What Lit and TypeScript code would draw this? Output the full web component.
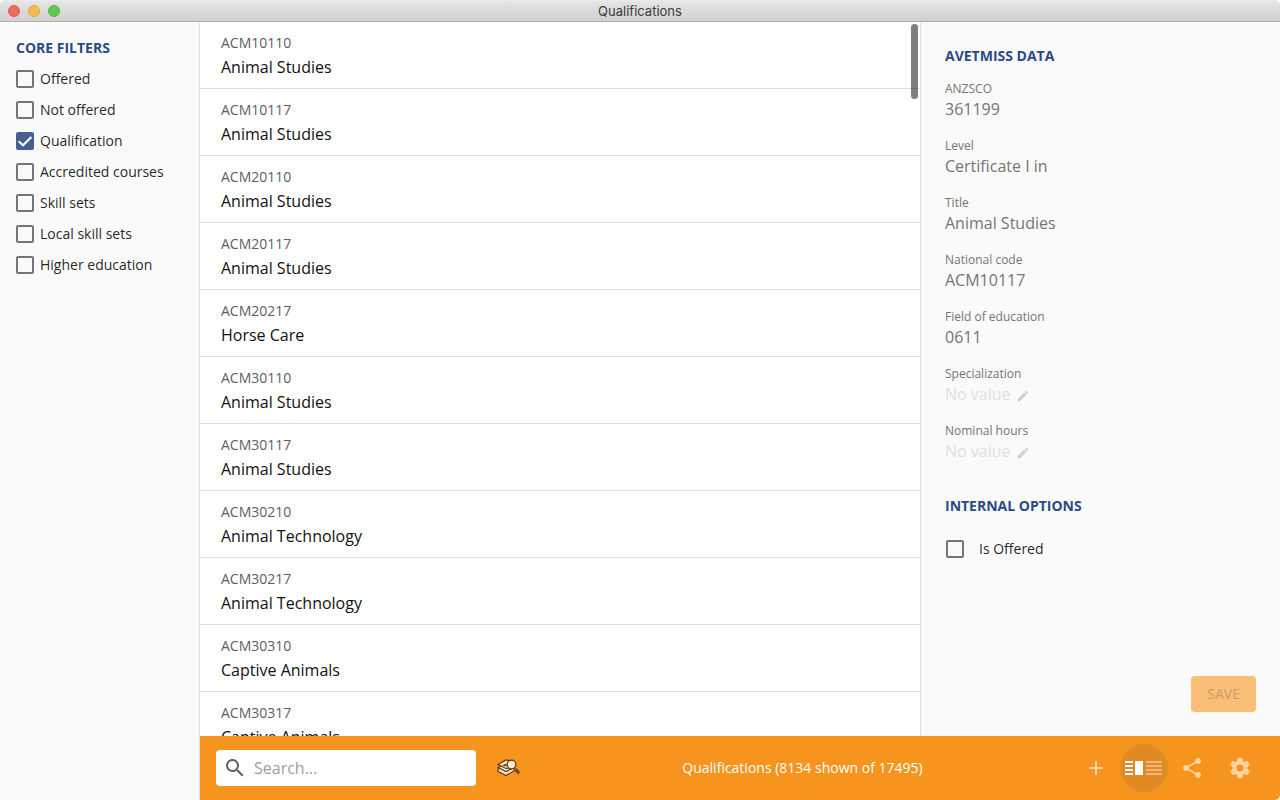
import { LitElement, html, css, svg } from "lit";
import { customElement, property } from "lit/decorators.js";

interface Qualification {
  code: string;
  title: string;
}

interface Field {
  label: string;
  value?: string;
}

const FILTERS = [
  { label: "Offered", checked: false },
  { label: "Not offered", checked: false },
  { label: "Qualification", checked: true },
  { label: "Accredited courses", checked: false },
  { label: "Skill sets", checked: false },
  { label: "Local skill sets", checked: false },
  { label: "Higher education", checked: false },
];

const QUALIFICATIONS: Qualification[] = [
  { code: "ACM10110", title: "Animal Studies" },
  { code: "ACM10117", title: "Animal Studies" },
  { code: "ACM20110", title: "Animal Studies" },
  { code: "ACM20117", title: "Animal Studies" },
  { code: "ACM20217", title: "Horse Care" },
  { code: "ACM30110", title: "Animal Studies" },
  { code: "ACM30117", title: "Animal Studies" },
  { code: "ACM30210", title: "Animal Technology" },
  { code: "ACM30217", title: "Animal Technology" },
  { code: "ACM30310", title: "Captive Animals" },
  { code: "ACM30317", title: "Captive Animals" },
];

const FIELDS: Field[] = [
  { label: "ANZSCO", value: "361199" },
  { label: "Level", value: "Certificate I in" },
  { label: "Title", value: "Animal Studies" },
  { label: "National code", value: "ACM10117" },
  { label: "Field of education", value: "0611" },
  { label: "Specialization" },
  { label: "Nominal hours" },
];

const icon = (d: string, size = 24) => html`
  <svg width=${size} height=${size} viewBox="0 0 24 24" fill="currentColor" aria-hidden="true">
    <path d=${d}></path>
  </svg>
`;

const ADD = "M19 13h-6v6h-2v-6H5v-2h6V5h2v6h6v2z";
const SHARE =
  "M18 16.08c-.76 0-1.44.3-1.96.77L8.91 12.7c.05-.23.09-.46.09-.7s-.04-.47-.09-.7l7.05-4.11c.54.5 1.25.81 2.04.81 1.66 0 3-1.34 3-3s-1.34-3-3-3-3 1.34-3 3c0 .24.04.47.09.7L8.04 9.81C7.5 9.31 6.79 9 6 9c-1.66 0-3 1.34-3 3s1.34 3 3 3c.79 0 1.5-.31 2.04-.81l7.12 4.16c-.05.21-.08.43-.08.65 0 1.61 1.31 2.92 2.92 2.92s2.92-1.31 2.92-2.92-1.31-2.92-2.92-2.92z";
const SETTINGS =
  "M19.43 12.98c.04-.32.07-.64.07-.98s-.03-.66-.07-.98l2.11-1.65c.19-.15.24-.42.12-.64l-2-3.46c-.12-.22-.39-.3-.61-.22l-2.49 1c-.52-.4-1.08-.73-1.69-.98l-.38-2.65C14.46 2.18 14.25 2 14 2h-4c-.25 0-.46.18-.49.42l-.38 2.65c-.61.25-1.17.59-1.69.98l-2.49-1c-.23-.09-.49 0-.61.22l-2 3.46c-.13.22-.07.49.12.64l2.11 1.65c-.04.32-.07.65-.07.98s.03.66.07.98l-2.11 1.65c-.19.15-.24.42-.12.64l2 3.46c.12.22.39.3.61.22l2.49-1c.52.4 1.08.73 1.69.98l.38 2.65c.03.24.24.42.49.42h4c.25 0 .46-.18.49-.42l.38-2.65c.61-.25 1.17-.59 1.69-.98l2.49 1c.23.09.49 0 .61-.22l2-3.46c.12-.22.07-.49-.12-.64l-2.11-1.65zM12 15.5c-1.93 0-3.5-1.57-3.5-3.5s1.57-3.5 3.5-3.5 3.5 1.57 3.5 3.5-1.57 3.5-3.5 3.5z";
const SEARCH =
  "M15.5 14h-.79l-.28-.27C15.41 12.59 16 11.11 16 9.5 16 5.91 13.09 3 9.5 3S3 5.91 3 9.5 5.91 16 9.5 16c1.61 0 3.09-.59 4.23-1.57l.27.28v.79l5 4.99L20.49 19l-4.99-5zm-6 0C7.01 14 5 11.99 5 9.5S7.01 5 9.5 5 14 7.01 14 9.5 11.99 14 9.5 14z";
const EDIT =
  "M3 17.25V21h3.75L17.81 9.94l-3.75-3.75L3 17.25zM20.71 7.04c.39-.39.39-1.02 0-1.41l-2.34-2.34c-.39-.39-1.02-.39-1.41 0l-1.83 1.83 3.75 3.75 1.83-1.83z";

@customElement("check-field")
export class CheckField extends LitElement {
  @property() label = "";
  @property({ type: Boolean }) checked = false;
  @property({ type: Boolean, reflect: true }) wide = false;

  static styles = css`
    :host {
      display: block;
    }
    .field {
      display: flex;
      align-items: center;
      gap: 6px;
      font-size: 14px;
      line-height: 20px;
      color: rgba(0, 0, 0, 0.87);
    }
    :host([wide]) .field {
      gap: 15px;
    }
    .box {
      display: grid;
      width: 18px;
      height: 18px;
    }
    .box > * {
      grid-area: 1 / 1;
    }
    .input {
      appearance: none;
      box-sizing: border-box;
      width: 18px;
      height: 18px;
      margin: 0;
      border: 2px solid #757575;
      border-radius: 2px;
    }
    .input:checked {
      background: #475f90;
      border-color: #475f90;
    }
    .tick {
      display: none;
      fill: none;
      stroke: #fff;
      stroke-width: 2;
      pointer-events: none;
    }
    .input:checked + .tick {
      display: block;
    }
  `;

  render() {
    return html`
      <label class="field">
        <span class="box">
          <input
            class="input"
            type="checkbox"
            .checked=${this.checked}
            @change=${(e: Event) => (this.checked = (e.target as HTMLInputElement).checked)}
          />
          <svg class="tick" width="18" height="18" viewBox="0 0 18 18" aria-hidden="true">
            <path d="M2.7 9.2 7 13.3 15.4 5"></path>
          </svg>
        </span>
        ${this.label}
      </label>
    `;
  }
}

@customElement("app-root")
export class AppRoot extends LitElement {
  static styles = css`
    :host {
      display: block;
      background: #fff;
      font-family: "Open Sans", sans-serif;
      color: rgba(0, 0, 0, 0.87);
    }
    .window {
      display: flex;
      flex-direction: column;
      height: 100vh;
      overflow: hidden;
      border-radius: 5px;
      background: #fafafa;
    }
    .titlebar {
      display: grid;
      grid-template-columns: 1fr auto 1fr;
      align-items: center;
      box-sizing: border-box;
      flex: none;
      height: 22px;
      padding: 0 8px;
      border-bottom: 1px solid #b0b0b0;
      background: linear-gradient(#ececec, #e4e4e4 10%, #d0d0d0);
    }
    .lights {
      display: flex;
      gap: 8px;
    }
    .light {
      box-sizing: border-box;
      width: 12px;
      height: 12px;
      padding: 0;
      border: 1px solid #e0574e;
      border-radius: 50%;
      background: #ee6a5f;
    }
    .light.minimise {
      border-color: #e0a840;
      background: #f5bd4f;
    }
    .light.zoom {
      border-color: #50b545;
      background: #61c554;
    }
    .window-title {
      margin: 0;
      font: 400 13px/20px Inter, sans-serif;
      color: #3c3c3c;
    }
    .body {
      display: grid;
      grid-template-columns: 200px minmax(0, 1fr);
      flex: 1;
      min-height: 0;
    }
    .filters {
      box-sizing: border-box;
      padding: 16px;
      border-right: 1px solid #e0e0e0;
    }
    .heading {
      margin: 0;
      font-size: 14px;
      line-height: 20px;
      font-weight: 700;
      color: #2b4a86;
      text-transform: uppercase;
    }
    .filter-list {
      display: flex;
      flex-direction: column;
      gap: 11px;
      margin-top: 11px;
    }
    .main {
      display: flex;
      flex-direction: column;
      min-width: 0;
      min-height: 0;
    }
    .content {
      display: grid;
      grid-template-columns: minmax(0, 2fr) minmax(0, 1fr);
      flex: 1;
      min-height: 0;
    }
    .list-pane {
      position: relative;
      overflow: hidden;
      background: #fff;
    }
    .list {
      margin: 0;
      padding: 0;
      list-style: none;
    }
    .row {
      padding: 10px 21px 8px;
      border-bottom: 1px solid #e0e0e0;
    }
    .code {
      margin: 0;
      font-size: 14px;
      line-height: 22px;
      font-weight: 500;
      color: #5e5e5e;
    }
    .title {
      margin: 0;
      font-size: 16px;
      line-height: 26px;
      color: #111;
    }
    .scroll-thumb {
      position: absolute;
      top: 2px;
      right: 2px;
      width: 7px;
      height: 75px;
      border-radius: 4px;
      background: rgba(0, 0, 0, 0.5);
    }
    .details {
      display: flex;
      flex-direction: column;
      padding: 24px;
      border-left: 1px solid #e0e0e0;
    }
    .fields {
      display: flex;
      flex-direction: column;
      gap: 17px;
      margin: 13px 0 35px;
    }
    .label {
      font-size: 12px;
      line-height: 20px;
      color: #757575;
    }
    .value {
      display: flex;
      align-items: center;
      gap: 5px;
      margin: 0;
      font-size: 16px;
      line-height: 20px;
      color: #757575;
    }
    .value.empty {
      color: #e0e0e0;
    }
    .edit {
      display: grid;
      padding: 4px 0 0;
      border: 0;
      background: none;
      color: #cfcfcf;
    }
    .option {
      margin: 23px 1px 0;
    }
    .save {
      align-self: flex-end;
      margin-top: auto;
      height: 36px;
      padding: 0 16px;
      border: 0;
      border-radius: 4px;
      background: #fabe77;
      font: 500 14px/24px "Open Sans", sans-serif;
      color: #ca9e68;
    }
    .toolbar {
      display: flex;
      align-items: center;
      box-sizing: border-box;
      flex: none;
      height: 64px;
      padding: 0 16px;
      background: #f7941d;
      color: #fff;
    }
    .search {
      display: flex;
      align-items: center;
      gap: 7px;
      box-sizing: border-box;
      width: 260px;
      height: 36px;
      padding: 0 7px;
      border-radius: 4px;
      background: #fff;
      color: #616161;
    }
    .search-input {
      flex: 1;
      min-width: 0;
      padding: 0;
      border: 0;
      outline: 0;
      background: none;
      font: 400 16px/24px "Open Sans", sans-serif;
      color: #333;
    }
    .search-input::placeholder {
      color: #9e9e9e;
      opacity: 1;
    }
    .tool {
      display: grid;
      place-items: center;
      width: 48px;
      height: 48px;
      padding: 0;
      border: 0;
      border-radius: 50%;
      background: none;
      color: #fcd3a1;
    }
    .tool.active {
      background: #e18a22;
    }
    .tool.finder {
      margin-left: 9px;
    }
    .status {
      flex: 1;
      margin: 0;
      font-size: 14px;
      line-height: 20px;
      text-align: center;
    }
  `;

  private renderField(field: Field) {
    return html`
      <div>
        <dt class="label">${field.label}</dt>
        ${field.value
          ? html`<dd class="value">${field.value}</dd>`
          : html`<dd class="value empty">
              No value
              <button class="edit" type="button" aria-label="Edit ${field.label}">
                ${icon(EDIT, 14)}
              </button>
            </dd>`}
      </div>
    `;
  }

  render() {
    return html`
      <div class="window">
        <header class="titlebar">
          <div class="lights">
            <button class="light" type="button" aria-label="Close"></button>
            <button class="light minimise" type="button" aria-label="Minimise"></button>
            <button class="light zoom" type="button" aria-label="Zoom"></button>
          </div>
          <h1 class="window-title">Qualifications</h1>
        </header>
        <div class="body">
          <aside class="filters">
            <h2 class="heading">Core filters</h2>
            <div class="filter-list">
              ${FILTERS.map(
                (f) => html`<check-field .label=${f.label} .checked=${f.checked}></check-field>`
              )}
            </div>
          </aside>
          <div class="main">
            <div class="content">
              <section class="list-pane" aria-label="Qualifications">
                <ul class="list">
                  ${QUALIFICATIONS.map(
                    (q) => html`
                      <li class="row">
                        <p class="code">${q.code}</p>
                        <p class="title">${q.title}</p>
                      </li>
                    `
                  )}
                </ul>
                <div class="scroll-thumb"></div>
              </section>
              <section class="details">
                <h2 class="heading">Avetmiss data</h2>
                <dl class="fields">${FIELDS.map((f) => this.renderField(f))}</dl>
                <h2 class="heading">Internal options</h2>
                <check-field class="option" wide label="Is Offered"></check-field>
                <button class="save" type="button" disabled>SAVE</button>
              </section>
            </div>
            <footer class="toolbar">
              <label class="search">
                ${icon(SEARCH)}
                <input class="search-input" type="text" placeholder="Search..." aria-label="Search" />
              </label>
              <button class="tool finder" type="button" aria-label="Find related">
                <svg width="24" height="22" viewBox="0 0 24 22" aria-hidden="true">
                  ${svg`
                    <path d="M1 14.5 9 18.5 17 14 17 11 9 10 1 12z" fill="#fbe3c4" stroke="#5b3c17" stroke-width="1.2"></path>
                    <path d="M1 10.5 9 14.5 16 11 8 8z" fill="#fbe3c4" stroke="#5b3c17" stroke-width="1.2"></path>
                    <path d="M1 7.5 9 3 16 4.500 15 10.500 9 11.500z" fill="#fbe3c4" stroke="#5b3c17" stroke-width="1.2"></path>
                    <path d="M5 8.200 9.500 6.500 9.500 9.500z" fill="#5b3c17"></path>
                    <circle cx="14.500" cy="7.500" r="4.300" fill="#fde9d0" stroke="#5b3c17" stroke-width="1.2"></circle>
                    <path d="M18 12 22.300 16.300" stroke="#6b4a25" stroke-width="3.200"></path>
                  `}
                </svg>
              </button>
              <p class="status">Qualifications (8134 shown of 17495)</p>
              <button class="tool" type="button" aria-label="Add">${icon(ADD)}</button>
              <button class="tool active" type="button" aria-label="Toggle layout">
                <svg width="38" height="16" viewBox="0 0 38 16" aria-hidden="true">
                  <path d="M0 1h8v2H0zM0 5h8v2H0zM0 9h8v2H0zM0 13h8v2H0zM10 1h8v14h-8z" fill="#fff"></path>
                  <path d="M21 1h16v2H21zM21 5h16v2H21zM21 9h16v2H21zM21 13h16v2H21z" fill="#eeb778"></path>
                </svg>
              </button>
              <button class="tool" type="button" aria-label="Share">${icon(SHARE)}</button>
              <button class="tool" type="button" aria-label="Settings">${icon(SETTINGS)}</button>
            </footer>
          </div>
        </div>
      </div>
    `;
  }
}
